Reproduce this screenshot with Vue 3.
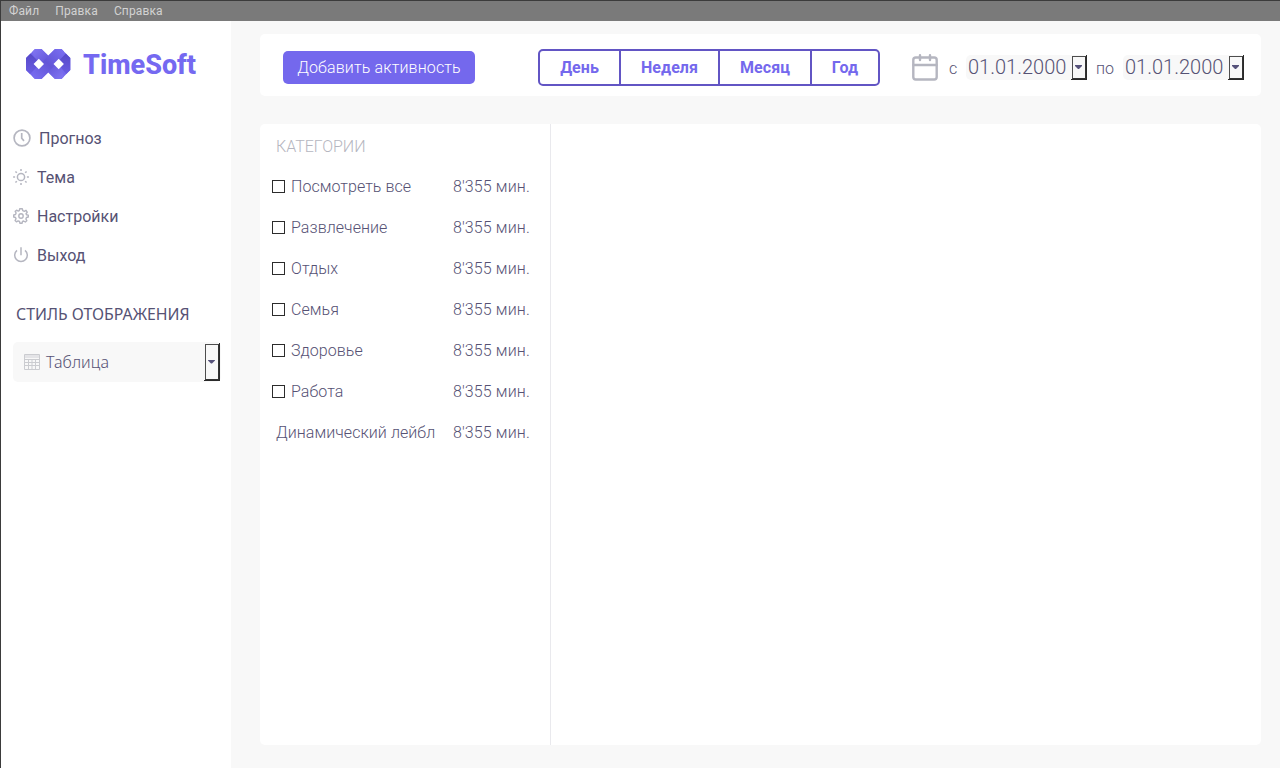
<script setup>
const menu = ['Файл', 'Правка', 'Справка']
const periods = [
  { label: 'День', width: 79 },
  { label: 'Неделя', width: 99 },
  { label: 'Месяц', width: 92 },
  { label: 'Год', width: 68 },
]
const categories = ['Посмотреть все', 'Развлечение', 'Отдых', 'Семья', 'Здоровье', 'Работа']
const rays = [0, 45, 90, 135, 180, 225, 270, 315]
</script>

<template>
  <div class="window">
    <header class="menubar"><span v-for="m in menu" :key="m">{{ m }}</span></header>
    <div class="body">
      <aside class="sidebar">
        <div class="brand">
          <svg class="logo" width="45" height="30" viewBox="0 0 45 30">
            <defs>
              <linearGradient id="g1" x1="0" y1="0" x2="1" y2="1"><stop offset="0" stop-color="#8377f4" /><stop offset=".5" stop-color="#6154d6" /><stop offset="1" stop-color="#8377f4" /></linearGradient>
              <linearGradient id="g2" x1="0" y1="1" x2="1" y2="0"><stop offset="0" stop-color="#7b6ff2" /><stop offset=".5" stop-color="#6255d7" /><stop offset="1" stop-color="#7b6ff2" /></linearGradient>
              <linearGradient id="side" x1="0" y1="0" x2="0" y2="1"><stop offset="0" stop-color="#5649c8" /><stop offset="1" stop-color="#6a5de2" /></linearGradient>
            </defs>
            <path d="M0 9 9 0H15.500L22.300 6.500 29 0H35.500L44.300 9V21L35.500 30H29L22.300 23.500 15.500 30H9L0 21Z" fill="#7468ed" />
            <path d="M9 0H15.500L35.500 20.500 38 27.500 35.500 30H29L9 9.500 6.500 2.500Z" fill="url(#g1)" />
            <path d="M29 0H35.500L38 2.500 35.500 9.500 15.500 30H9L6.500 27.500 9 20.500Z" fill="url(#g2)" />
            <path d="M0 9 4.500 4.500 11.500 11.500 8 15 11 18 4 25 0 21ZM44.300 9 39.800 4.500 33.500 11 37.500 15 34.500 18 40.300 25 44.300 21Z" fill="url(#side)" />
            <path d="M12.800 9.800 18 15 12.800 20.200 7.600 15ZM32.700 9.800 37.900 15 32.700 20.200 27.500 15Z" fill="#fff" />
          </svg>
          <span class="name">TimeSoft</span>
        </div>
        <nav>
          <div class="nav-item">
            <svg width="18" height="18" viewBox="0 0 18 18" fill="none" stroke="#b5b6c0" stroke-width="1.700"><circle cx="9" cy="9" r="7.900" /><path d="M8.700 4V9.300L11 11.900" /></svg>
            <span>Прогноз</span>
          </div>
          <div class="nav-item">
            <svg width="16" height="16" viewBox="0 0 16 16" fill="none" stroke="#b5b6c0" stroke-width="1.500"><circle cx="8" cy="8" r="3.600" /><path v-for="r in rays" :key="r" d="M8 .1V2.100" :transform="`rotate(${r} 8 8)`" /></svg>
            <span>Тема</span>
          </div>
          <div class="nav-item">
            <svg width="16" height="16" viewBox="0 0 16 16" fill="none" stroke="#b5b6c0" stroke-width="1.400" stroke-linejoin="round"><circle cx="8" cy="8" r="2.200" /><path d="M6.700 .8H9.300L9.800 2.700 11.300 3.300 13 2.300 14.200 4.200 13 5.700 13.500 6.700 15.300 7.100V9L13.500 9.500 12.900 11 13.800 12.700 12.300 14 10.600 13 9.500 13.500 9 15.300H7L6.500 13.500 5.100 12.900 3.400 13.800 2.100 12.500 3 10.700 2.500 9.500 .7 9V7L2.500 6.500 3.100 5 2.200 3.400 3.600 2.200 5.300 3.100 6.300 2.600Z" /></svg>
            <span>Настройки</span>
          </div>
          <div class="nav-item">
            <svg width="16" height="16" viewBox="0 0 16 16" fill="none" stroke="#b5b6c0" stroke-width="1.500"><path d="M4 3.300A6.300 6.300 0 1 0 12 3.300M8 .3V8.300" /></svg>
            <span>Выход</span>
          </div>
        </nav>
        <div class="style-title">СТИЛЬ ОТОБРАЖЕНИЯ</div>
        <div class="select">
          <svg width="16" height="16" viewBox="0 0 16 16" fill="none" stroke="#cbccd0" stroke-width="1"><path d="M1 1H15V4H1Z" fill="#e4e4e7" stroke="none" /><path d="M.5 .5H15.500V15.500H.5ZM.5 5.500H15.500M.5 8.500H15.500M.5 11.500H15.500M4.500 5.500V15M8 5.500V15M11.500 5.500V15" /></svg>
          <span>Таблица</span>
          <i class="drop tall"></i>
        </div>
      </aside>
      <main>
        <section class="toolbar">
          <button class="add">Добавить активность</button>
          <div class="periods"><div v-for="p in periods" :key="p.label" class="period" :style="{ width: p.width + 'px' }">{{ p.label }}</div></div>
          <div class="range">
            <svg width="26" height="27" viewBox="0 0 26 27" fill="none" stroke="#b5b6c0" stroke-width="2.400" stroke-linecap="round"><rect x="1.300" y="3.500" width="23.400" height="22" rx="2.500" /><path d="M1.500 11H24.500M8 1.300V6M18 1.300V6" /></svg>
            <span class="from">с</span>
            <div class="date"><span>01.01.2000</span><i class="drop"></i></div>
            <span class="to">по</span>
            <div class="date"><span>01.01.2000</span><i class="drop"></i></div>
          </div>
        </section>
        <section class="panel">
          <div class="categories">
            <div class="heading">КАТЕГОРИИ</div>
            <div v-for="c in categories" :key="c" class="row"><i class="box"></i><span class="label">{{ c }}</span><span class="time">8'355 мин.</span></div>
            <div class="row dynamic"><span class="label">Динамический лейбл</span><span class="time">8'355 мин.</span></div>
          </div>
        </section>
      </main>
    </div>
  </div>
</template>

<style>
body { margin: 0; overflow: hidden; }
</style>
<style scoped>
* { box-sizing: border-box; }
.window { width: 1280px; height: 768px; display: flex; flex-direction: column; border: solid #3b3b3b; border-width: 1px 0 0 1px; background: #f8f8f8; color: #565274; font: 300 16px/20px Roboto, "Noto Sans", sans-serif; white-space: nowrap; }
.menubar { height: 20px; background: #7a7a7a; color: #d2d2d2; display: flex; gap: 16px; padding-left: 8px; font-size: 12px; font-weight: 400; line-height: 20px; letter-spacing: .15px; flex: none; }
.body { flex: 1; display: flex; min-height: 0; }
.sidebar { width: 230px; background: #fff; padding-left: 12px; flex: none; }
.brand { display: flex; align-items: center; height: 30px; margin: 28px 0 0 13px; }
.name { margin: 2px 0 0 12px; font-size: 27px; line-height: 30px; font-weight: 800; color: #7569f1; }
nav { margin-top: 40px; }
.nav-item { display: flex; align-items: center; height: 39px; font-weight: 400; gap: 8px; }
.nav-item svg { margin-bottom: 2px; }
.style-title { margin: 29px 0 0 3px; font: 400 15.850px/20px "Noto Sans", sans-serif; }
.select { width: 208px; height: 40px; margin-top: 18px; background: #f8f8f8; border-radius: 5px; display: flex; align-items: center; padding: 0 1px 0 11px; font: 300 16px/20px "Noto Sans", sans-serif; letter-spacing: .1px; }
.select span { margin-left: 6px; flex: 1; }
.drop { position: relative; width: 16px; height: 25px; flex: none; display: flex; align-items: center; justify-content: center; border: solid #2a2a2a; border-width: 0 1px 1px 0; }
.drop::before { content: ""; position: absolute; inset: 1px 0 0 1px; border: 1px solid #4d4d4d; border-right-color: #333; border-bottom-color: #333; }
.drop::after { content: ""; width: 7px; height: 4px; background: #56527a; clip-path: polygon(0 0, 100% 0, 100% 25%, 57% 100%, 43% 100%, 0 25%); }
.drop.tall { height: 38px; }
main { flex: 1; padding: 13px 19px 0 29px; }
.toolbar { height: 62px; background: #fff; border-radius: 5px; display: flex; align-items: center; padding-left: 23px; }
.add { width: 192px; height: 33px; padding: 0; border: 0; border-radius: 5px; background: #7468ed; color: #fff; font: 300 16px/33px Roboto, sans-serif; letter-spacing: .15px; margin-top: 4px; }
.periods { display: flex; margin: 4px 0 0 63px; height: 37px; border: 2px solid #6255c4; border-radius: 5px; width: 342px; }
.period { text-align: center; font-weight: 700; line-height: 33px; color: #7468ed; border-left: 2px solid #6255c4; letter-spacing: .05px; }
.period:first-child { border-left: 0; }
.range { display: flex; align-items: center; margin: 5px 0 0 32px; }
.from { margin: 2px 0 0 11px; width: 17px; }
.to { margin: 2px 0 0 9px; width: 27px; }
.date { display: flex; height: 25px; width: 121px; background: #f8f8f8; border-radius: 5px; justify-content: space-between; padding-left: 2px; font-size: 20px; line-height: 25px; }
.panel { margin-top: 28px; height: 621px; background: #fff; border-radius: 5px; }
.categories { width: 291px; height: 100%; border-right: 1px solid #e9e9ed; padding: 13px 0 0 12px; }
.heading { color: #b5b6c0; margin: 0 0 9px 4px; }
.row { height: 41px; display: flex; align-items: center; letter-spacing: .06px; }
.box { width: 13px; height: 13px; border: 1px solid #2c2c2c; margin-right: 6px; flex: none; }
.label { width: 162px; flex: none; }
.time { letter-spacing: .12px; }
.dynamic { padding-left: 4px; }
.dynamic .label { width: 177px; }
</style>
